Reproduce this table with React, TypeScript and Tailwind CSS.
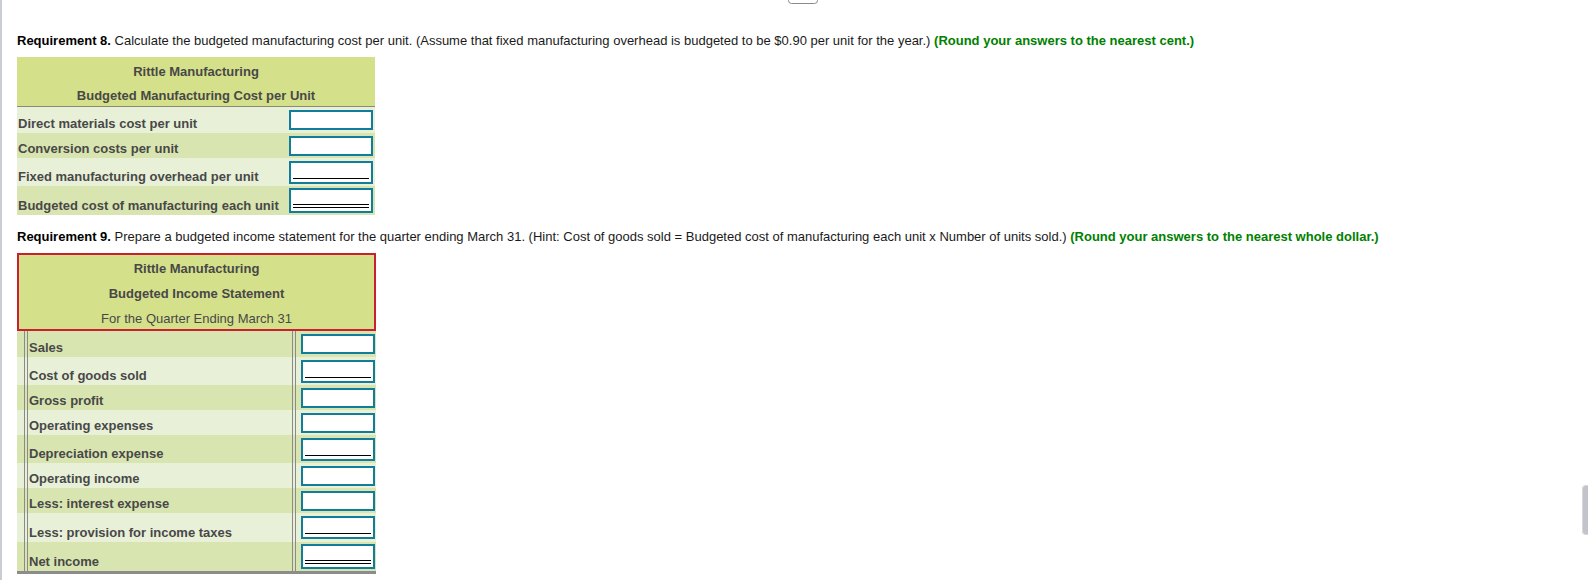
import React from 'react';

const LIGHT = 'bg-[#e8f1d8]';
const DARK = 'bg-[#d9e5b0]';

type Line = 'none' | 'single' | 'double';

function AnswerBox({ width, line }: { width: string; line: Line }) {
	const tall = line === 'none' ? 'h-[20px]' : line === 'single' ? 'h-[23px]' : 'h-[25px]';
	return (
		<div className={`${width} ${tall} flex flex-col justify-end border-2 border-[#127d9b] bg-white px-[2px] pb-[3px]`}>
			{line === 'single' && <div className="h-[1px] bg-black" />}
			{line === 'double' && (
				<div className="flex flex-col gap-[2px]">
					<div className="h-[1px] bg-black" />
					<div className="h-[1px] bg-black" />
				</div>
			)}
		</div>
	);
}

const costRows: { label: string; h: string; bg: string; line: Line }[] = [
	{ label: 'Direct materials cost per unit', h: 'h-[26px]', bg: LIGHT, line: 'none' },
	{ label: 'Conversion costs per unit', h: 'h-[25px]', bg: DARK, line: 'none' },
	{ label: 'Fixed manufacturing overhead per unit', h: 'h-[28px]', bg: LIGHT, line: 'single' },
	{ label: 'Budgeted cost of manufacturing each unit', h: 'h-[29px]', bg: DARK, line: 'double' },
];

const incomeRows: { label: string; h: string; bg: string; line: Line }[] = [
	{ label: 'Sales', h: 'h-[26px]', bg: DARK, line: 'none' },
	{ label: 'Cost of goods sold', h: 'h-[28px]', bg: LIGHT, line: 'single' },
	{ label: 'Gross profit', h: 'h-[25px]', bg: DARK, line: 'none' },
	{ label: 'Operating expenses', h: 'h-[25px]', bg: LIGHT, line: 'none' },
	{ label: 'Depreciation expense', h: 'h-[28px]', bg: DARK, line: 'single' },
	{ label: 'Operating income', h: 'h-[25px]', bg: LIGHT, line: 'none' },
	{ label: 'Less: interest expense', h: 'h-[25px]', bg: DARK, line: 'none' },
	{ label: 'Less: provision for income taxes', h: 'h-[29px]', bg: LIGHT, line: 'single' },
	{ label: 'Net income', h: 'h-[29px]', bg: DARK, line: 'double' },
];

function CostTable() {
	return (
		<div className="flex w-[358px] flex-col text-[13px] font-bold text-[#484848]">
			<div className="flex h-[50px] flex-col items-center border-b border-[#8a8a7a] bg-[#d5e08a] pt-[3px] leading-6">
				<div>Rittle Manufacturing</div>
				<div>Budgeted Manufacturing Cost per Unit</div>
			</div>
			{costRows.map((r) => (
				<div key={r.label} className={`flex ${r.h} ${r.bg} items-center justify-between pr-[2px]`}>
					<span className="self-end pb-[1px] pl-[1px] leading-4">{r.label}</span>
					<AnswerBox width="w-[84px]" line={r.line} />
				</div>
			))}
		</div>
	);
}

function IncomeTable() {
	return (
		<div className="flex w-[359px] flex-col text-[13px] text-[#484848]">
			<div className="flex h-[78px] flex-col items-center overflow-hidden border-2 border-[#c8202f] bg-[#d5e08a] pt-[1px] leading-[25px]">
				<div className="font-bold">Rittle Manufacturing</div>
				<div className="font-bold">Budgeted Income Statement</div>
				<div>For the Quarter Ending March 31</div>
			</div>
			<div className="flex flex-col border-b-[3px] border-[#8c8c8c]">
				{incomeRows.map((r) => (
					<div key={r.label} className={`flex ${r.h} ${r.bg}`}>
						<div className="w-[7px]" />
						<div className="flex flex-1 items-end border-x-4 border-double border-[#8a8a8a] pb-[1px] pl-[1px] font-bold leading-4">
							{r.label}
						</div>
						<div className="flex flex-1 grow-0 basis-[80px] items-center justify-end pr-[1px]">
							<AnswerBox width="w-[74px]" line={r.line} />
						</div>
					</div>
				))}
			</div>
		</div>
	);
}

export default function App() {
	return (
		<div
			className="relative min-h-[580px] border-l-2 border-[#c9ccd4] bg-white pl-[15px] pt-[33px] text-[13px] leading-4 text-[#1a1a1a]"
			style={{ fontFamily: '"Liberation Sans", Arial, sans-serif' }}
		>
			<div className="absolute left-[786px] top-[-3px] h-[7px] w-[30px] rounded-[4px] border border-[#8a8a8a] bg-white" />
			<div className="absolute right-0 top-[485px] h-[50px] w-[6px] rounded-l-[4px] border border-r-0 border-[#d8d8dc] bg-[#c3c4c9]" />

			<p>
				<span className="font-bold text-black">Requirement 8.</span> Calculate the budgeted manufacturing cost
				per unit. (Assume that fixed manufacturing overhead is budgeted to be $0.90 per unit for the year.){' '}
				<span className="font-bold text-[#008000]">(Round your answers to the nearest cent.)</span>
			</p>
			<div className="mt-2">
				<CostTable />
			</div>

			<p className="mt-[14px]">
				<span className="font-bold text-black">Requirement 9.</span> Prepare a budgeted income statement for the
				quarter ending March 31. (Hint: Cost of goods sold = Budgeted cost of manufacturing each unit x Number of
				units sold.){' '}
				<span className="font-bold text-[#008000]">(Round your answers to the nearest whole dollar.)</span>
			</p>
			<div className="mt-2">
				<IncomeTable />
			</div>
		</div>
	);
}
